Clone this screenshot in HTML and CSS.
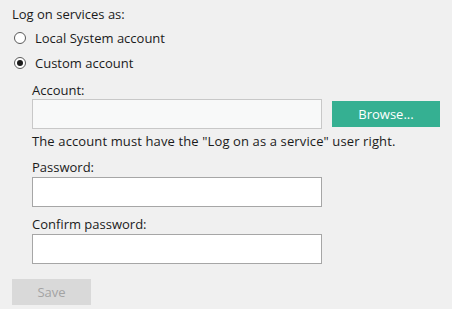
FILE: index.html
```html
<!DOCTYPE html>
<html>
<head>
<meta charset="utf-8">
<link rel="stylesheet" href="styles.css">
</head>
<body>
<div class="panel">
  <div class="heading">Log on services as:</div>
  <label class="radio-row r1"><span class="radio"></span><span>Local System account</span></label>
  <label class="radio-row r2"><span class="radio checked"></span><span>Custom account</span></label>
  <div class="indent">
    <div class="label l-account">Account:</div>
    <div class="account-row">
      <div class="input input-soft"></div>
      <button class="btn-browse">Browse...</button>
    </div>
    <div class="hint">The account must have the "Log on as a service" user right.</div>
    <div class="label l-pass">Password:</div>
    <div class="input"></div>
    <div class="label l-confirm">Confirm password:</div>
    <div class="input"></div>
  </div>
  <button class="btn-save">Save</button>
</div>
</body>
</html>
```

FILE: styles.css
```css
html, body {
  margin: 0;
  padding: 0;
  background: #f0f0f0;
}
body {
  font-family: "Open Sans", "Noto Sans", sans-serif;
  font-size: 13px;
  color: #1b1b1b;
}
.panel {
  display: flex;
  flex-direction: column;
  padding: 5px 12px 0 12px;
}
.heading {
  line-height: 18px;
}
.radio-row {
  display: flex;
  align-items: center;
  gap: 9px;
  line-height: 18px;
  padding-left: 2px;
}
.r1 { margin-top: 6px; }
.r2 { margin-top: 7px; }
.radio {
  width: 10px;
  height: 10px;
  border: 1px solid #5a5a5a;
  border-radius: 50%;
  background: #fff;
  display: flex;
  align-items: center;
  justify-content: center;
}
.radio.checked::after {
  content: "";
  width: 6px;
  height: 6px;
  border-radius: 50%;
  background: #1b1b1b;
}
.indent {
  display: flex;
  flex-direction: column;
  padding-left: 20px;
}
.label {
  line-height: 18px;
}
.l-account { margin-top: 9px; }
.l-pass { margin-top: 8px; margin-bottom: 1px; }
.l-confirm { margin-top: 8px; margin-bottom: 1px; }
.account-row {
  display: flex;
  align-items: center;
  gap: 10px;
}
.input {
  width: 288px;
  height: 28px;
  border: 1px solid #a6a6a6;
  background: #fff;
}
.input-soft {
  border-color: #c8c8c8;
  background: #f8f9f9;
}
.btn-browse {
  width: 108px;
  height: 26px;
  border: none;
  background: #35b092;
  color: #fff;
  font-family: inherit;
  font-size: 13px;
  padding: 0;
}
.hint {
  margin-top: 3px;
  line-height: 18px;
  letter-spacing: 0.12px;
}
.btn-save {
  margin-top: 15px;
  width: 79px;
  height: 26px;
  border: none;
  background: #d9d9d9;
  color: #a3a3a3;
  font-family: inherit;
  font-size: 13px;
  padding: 0;
}
```
